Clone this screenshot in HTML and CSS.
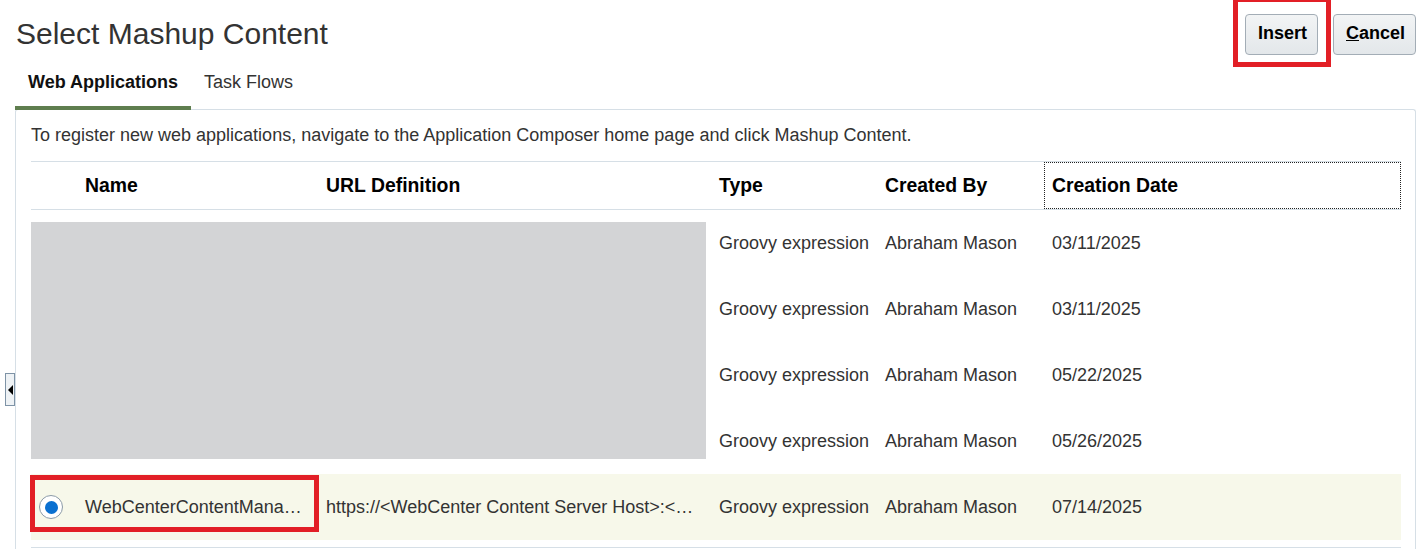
FILE: index.html
```html
<!DOCTYPE html>
<html lang="en">
<head>
<meta charset="utf-8">
<title>Select Mashup Content</title>
<link rel="stylesheet" href="styles.css">
</head>
<body>
<div class="page">
  <header class="header">
    <h1 class="title">Select Mashup Content</h1>
    <div class="actions">
      <button class="btn">Insert</button>
      <button class="btn"><span class="u">C</span>ancel</button>
    </div>
  </header>

  <nav class="tabs">
    <div class="tab active">Web Applications</div>
    <div class="tab">Task Flows</div>
  </nav>

  <section class="panel">
    <p class="hint">To register new web applications, navigate to the Application Composer home page and click Mashup Content.</p>
    <div class="table">
      <div class="row head">
        <div class="cell"></div>
        <div class="cell">Name</div>
        <div class="cell">URL Definition</div>
        <div class="cell">Type</div>
        <div class="cell">Created By</div>
        <div class="cell focus">Creation Date</div>
      </div>
      <div class="row">
        <div class="cell"></div><div class="cell"></div><div class="cell"></div>
        <div class="cell">Groovy expression</div><div class="cell">Abraham Mason</div><div class="cell">03/11/2025</div>
      </div>
      <div class="row">
        <div class="cell"></div><div class="cell"></div><div class="cell"></div>
        <div class="cell">Groovy expression</div><div class="cell">Abraham Mason</div><div class="cell">03/11/2025</div>
      </div>
      <div class="row">
        <div class="cell"></div><div class="cell"></div><div class="cell"></div>
        <div class="cell">Groovy expression</div><div class="cell">Abraham Mason</div><div class="cell">05/22/2025</div>
      </div>
      <div class="row">
        <div class="cell"></div><div class="cell"></div><div class="cell"></div>
        <div class="cell">Groovy expression</div><div class="cell">Abraham Mason</div><div class="cell">05/26/2025</div>
      </div>
      <div class="row selected">
        <div class="cell radio-cell"><span class="radio"><span class="dot"></span></span></div>
        <div class="cell">WebCenterContentMana…</div>
        <div class="cell">https://&lt;WebCenter Content Server Host&gt;:&lt;…</div>
        <div class="cell">Groovy expression</div>
        <div class="cell">Abraham Mason</div>
        <div class="cell">07/14/2025</div>
      </div>
      <div class="redacted"></div>
    </div>
  </section>

  <div class="splitter"><span class="arrow"></span></div>
  <div class="mark mark-insert"></div>
  <div class="mark mark-row"></div>
</div>
</body>
</html>
```

FILE: styles.css
```css
* { box-sizing: border-box; }

html, body {
  margin: 0;
  padding: 0;
  background: #ffffff;
  font-family: "Liberation Sans", Arial, sans-serif;
  color: #333333;
}

.page {
  position: relative;
  width: 1420px;
  height: 549px;
  overflow: hidden;
}

.header {
  display: flex;
  justify-content: space-between;
  align-items: flex-start;
  padding: 14px 4px 0 16px;
  height: 55px;
}

.title {
  margin: 3px 0 0;
  font-size: 30px;
  line-height: 34px;
  font-weight: normal;
  color: #333333;
}

.actions {
  display: flex;
  gap: 15px;
}

.btn {
  height: 41px;
  padding: 0 12px 3px;
  font-family: "Liberation Sans", Arial, sans-serif;
  font-size: 18px;
  font-weight: bold;
  color: #000000;
  background: linear-gradient(#f2f4f5, #e3e7ea);
  border: 1px solid #a3adb6;
  border-radius: 4px;
}

.btn:first-child { width: 73px; }
.btn:last-child { width: 83px; }

.u { text-decoration: underline; }

.tabs {
  display: flex;
  margin-left: 15px;
  position: relative;
  z-index: 2;
}

.tab {
  padding: 17px 13px 13px;
  font-size: 18px;
  line-height: 21px;
  color: #333333;
  border-bottom: 4px solid transparent;
}

.tab.active {
  font-weight: bold;
  color: #111111;
  border-bottom-color: #5f7e4f;
  width: 176px;
}

.panel {
  margin: -1px 0 0 15px;
  width: 1401px;
  height: 450px;
  border: 1px solid #d6dfe6;
  border-bottom: none;
  border-radius: 3px 3px 0 0;
  padding: 15px 14px 0 15px;
}

.hint {
  margin: 0 0 16px;
  font-size: 18px;
  line-height: 20px;
  color: #333333;
}

.table {
  position: relative;
  width: 1370px;
  border-top: 1px solid #d6dfe6;
  border-bottom: 1px solid #d6dfe6;
  padding-bottom: 7px;
}

.row {
  display: grid;
  grid-template-columns: 46px 241px 393px 166px 167px 357px;
  height: 66px;
  align-items: center;
  font-size: 18px;
  color: #333333;
}

.row.head {
  height: 48px;
  border-bottom: 1px solid #d6dfe6;
  font-size: 19.4px;
  font-weight: bold;
  color: #000000;
}

.cell {
  padding: 0 8px;
  white-space: nowrap;
  overflow: hidden;
  line-height: 22px;
}

.row.head .cell {
  height: 100%;
  line-height: 47px;
}

.cell.focus {
  outline: 1px dotted #222222;
  outline-offset: -1px;
}

.row.selected {
  background: #f7f8ea;
}

.radio-cell {
  padding-left: 8px;
  display: flex;
  align-items: center;
  height: 100%;
}

.radio {
  width: 24px;
  height: 24px;
  border-radius: 50%;
  border: 1px solid #8b9aa7;
  background: #ffffff;
  display: flex;
  align-items: center;
  justify-content: center;
}

.dot {
  width: 13px;
  height: 13px;
  border-radius: 50%;
  background: #0a70d0;
}

.redacted {
  position: absolute;
  left: 0;
  top: 60px;
  width: 675px;
  height: 237px;
  background: #d3d4d6;
}

.splitter {
  position: absolute;
  left: 5px;
  top: 373px;
  width: 10px;
  height: 33px;
  border: 1px solid #7e93a6;
  background: #eef2f5;
  display: flex;
  align-items: center;
  justify-content: center;
}

.arrow {
  width: 0;
  height: 0;
  border-top: 5px solid transparent;
  border-bottom: 5px solid transparent;
  border-right: 5px solid #000000;
}

.mark {
  position: absolute;
  border: 5px solid #e21f26;
}

.mark-insert {
  left: 1233px;
  top: -3px;
  width: 98px;
  height: 70px;
}

.mark-row {
  left: 30px;
  top: 475px;
  width: 289px;
  height: 57px;
}
```
